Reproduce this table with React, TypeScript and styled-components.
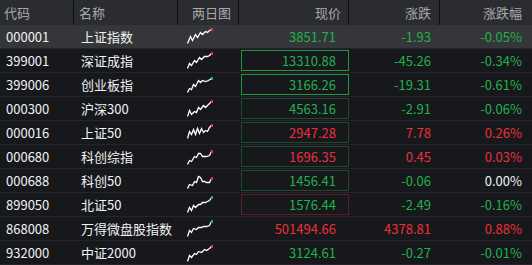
import React from "react";
import styled, { createGlobalStyle } from "styled-components";

const Global = createGlobalStyle`
  html, body { margin: 0; padding: 0; background: #16181c; }
  body { font-family: "Noto Sans CJK SC", "Noto Sans", sans-serif; }
`;

const GREEN = "#22b14c";
const RED = "#ee2f3b";
const COLS = "74px 104px 61px 110px 91px 92px";

const Table = styled.div`
  width: 532px;
  height: 265px;
  overflow: hidden;
  background: #16181c;
  font-size: 13px;
`;

const HeaderRow = styled.div`
  display: grid;
  grid-template-columns: ${COLS};
  height: 25px;
  background: #2b2c30;
  color: #a9a9ab;
`;

const HeadCell = styled.div<{ $right?: boolean; $pad: number; $last?: boolean }>`
  display: flex;
  align-items: center;
  justify-content: ${(p) => (p.$right ? "flex-end" : "flex-start")};
  padding: ${(p) => (p.$right ? `0 ${p.$pad}px 0 0` : `0 0 0 ${p.$pad}px`)};
  border-right: ${(p) => (p.$last ? "none" : "1px solid #0e0f11")};
  line-height: 1;
`;

const Row = styled.div<{ $selected?: boolean }>`
  display: grid;
  grid-template-columns: ${COLS};
  height: 24px;
  box-sizing: border-box;
  border-bottom: 1px solid #23252a;
  background: ${(p) => (p.$selected ? "#353639" : "#16181c")};
  color: #f2f2f2;
`;

const TextCell = styled.div<{ $pad: number }>`
  display: flex;
  align-items: center;
  padding-left: ${(p) => p.$pad}px;
  white-space: nowrap;
`;

const ChartCell = styled.div`
  display: flex;
  align-items: flex-start;
  padding: 3px 0 0 9px;
`;

const PriceBox = styled.div<{ $border: string; $color: string }>`
  margin: 1px 0 0 2px;
  height: 21px;
  box-sizing: border-box;
  border: 1px solid ${(p) => p.$border};
  display: flex;
  align-items: center;
  justify-content: flex-end;
  padding-right: 12px;
  color: ${(p) => p.$color};
`;

const NumCell = styled.div<{ $color: string; $pad: number }>`
  display: flex;
  align-items: center;
  justify-content: flex-end;
  padding-right: ${(p) => p.$pad}px;
  color: ${(p) => p.$color};
`;

type Item = {
  code: string;
  name: string;
  price: string;
  chg: string;
  pct: string;
  color: string;
  pctColor?: string;
  box: string;
  dot: string;
  pts: number[][];
};

const BRIGHT_G = "#1f963f";
const DIM_G = "#1b4a2b";
const DIM_R = "#5e1d24";

const data: Item[] = [
  { code: "000001", name: "上证指数", price: "3851.71", chg: "-1.93", pct: "-0.05%", color: GREEN, box: "transparent", dot: RED,
    pts: [[0,14],[3,7],[5,11],[8,5],[10,8],[13,3],[15,5],[18,2],[20,3],[22,1],[24,0]] },
  { code: "399001", name: "深证成指", price: "13310.88", chg: "-45.26", pct: "-0.34%", color: GREEN, box: BRIGHT_G, dot: RED,
    pts: [[0,15],[2,10],[4,12],[7,7],[9,9],[12,4],[14,6],[17,3],[20,3],[22,2],[24,0]] },
  { code: "399006", name: "创业板指", price: "3166.26", chg: "-19.31", pct: "-0.61%", color: GREEN, box: BRIGHT_G, dot: GREEN,
    pts: [[0,15],[2,11],[4,12],[6,7],[8,9],[11,3],[13,5],[15,3],[18,4],[21,3],[24,1]] },
  { code: "000300", name: "沪深300", price: "4563.16", chg: "-2.91", pct: "-0.06%", color: GREEN, box: DIM_G, dot: RED,
    pts: [[0,15],[2,9],[4,13],[7,10],[9,11],[11,6],[13,8],[16,4],[18,6],[21,3],[24,0]] },
  { code: "000016", name: "上证50", price: "2947.28", chg: "7.78", pct: "0.26%", color: RED, box: DIM_G, dot: RED,
    pts: [[0,13],[2,6],[4,9],[6,4],[8,9],[10,3],[12,8],[14,3],[16,7],[18,5],[20,6],[22,2],[24,0]] },
  { code: "000680", name: "科创综指", price: "1696.35", chg: "0.45", pct: "0.03%", color: RED, box: DIM_G, dot: RED,
    pts: [[0,15],[2,11],[4,12],[7,7],[9,8],[11,4],[13,4],[15,7],[19,7],[22,6],[24,2]] },
  { code: "000688", name: "科创50", price: "1456.41", chg: "-0.06", pct: "0.00%", color: GREEN, pctColor: "#f2f2f2", box: DIM_G, dot: RED,
    pts: [[0,15],[2,11],[5,12],[7,8],[9,9],[11,3],[13,4],[15,8],[17,8],[19,9],[22,9],[24,5]] },
  { code: "899050", name: "北证50", price: "1576.44", chg: "-2.49", pct: "-0.16%", color: GREEN, box: DIM_R, dot: GREEN,
    pts: [[0,15],[2,10],[4,13],[6,8],[8,10],[11,7],[13,7],[15,5],[18,5],[20,4],[22,3],[24,0]] },
  { code: "868008", name: "万得微盘股指数", price: "501494.66", chg: "4378.81", pct: "0.88%", color: RED, box: "transparent", dot: GREEN,
    pts: [[0,15],[2,9],[4,11],[6,7],[9,8],[11,6],[14,6],[16,5],[19,5],[22,4],[24,0]] },
  { code: "932000", name: "中证2000", price: "3124.61", chg: "-0.27", pct: "-0.01%", color: GREEN, box: "transparent", dot: RED,
    pts: [[0,16],[2,10],[4,12],[7,8],[9,9],[11,6],[14,7],[17,4],[19,5],[22,3],[24,1]] },
];

const Spark: React.FC<{ pts: number[][]; dot: string }> = ({ pts, dot }) => {
  const last = pts[pts.length - 1];
  return (
    <svg width="27" height="19" viewBox="0 0 27 19">
      <polyline
        points={pts.map((p) => `${p[0] + 0.5},${p[1] + 1.5}`).join(" ")}
        fill="none"
        stroke="#ffffff"
        strokeWidth="1.3"
        strokeLinejoin="miter"
      />
      <rect x={last[0]} y={last[1]} width="2" height="3" fill={dot} />
    </svg>
  );
};

export default function App() {
  return (
    <>
      <Global />
      <Table>
        <HeaderRow>
          <HeadCell $pad={4}>代码</HeadCell>
          <HeadCell $pad={5}>名称</HeadCell>
          <HeadCell $right $pad={7}>两日图</HeadCell>
          <HeadCell $right $pad={7}>现价</HeadCell>
          <HeadCell $right $pad={8}>涨跌</HeadCell>
          <HeadCell $right $pad={10} $last>涨跌幅</HeadCell>
        </HeaderRow>
        {data.map((d, i) => (
          <Row key={d.code} $selected={i === 0}>
            <TextCell $pad={6}>{d.code}</TextCell>
            <TextCell $pad={7}>{d.name}</TextCell>
            <ChartCell>
              <Spark pts={d.pts} dot={d.dot} />
            </ChartCell>
            <PriceBox $border={d.box} $color={d.color}>{d.price}</PriceBox>
            <NumCell $color={d.color} $pad={9}>{d.chg}</NumCell>
            <NumCell $color={d.pctColor ?? d.color} $pad={10}>{d.pct}</NumCell>
          </Row>
        ))}
      </Table>
    </>
  );
}
